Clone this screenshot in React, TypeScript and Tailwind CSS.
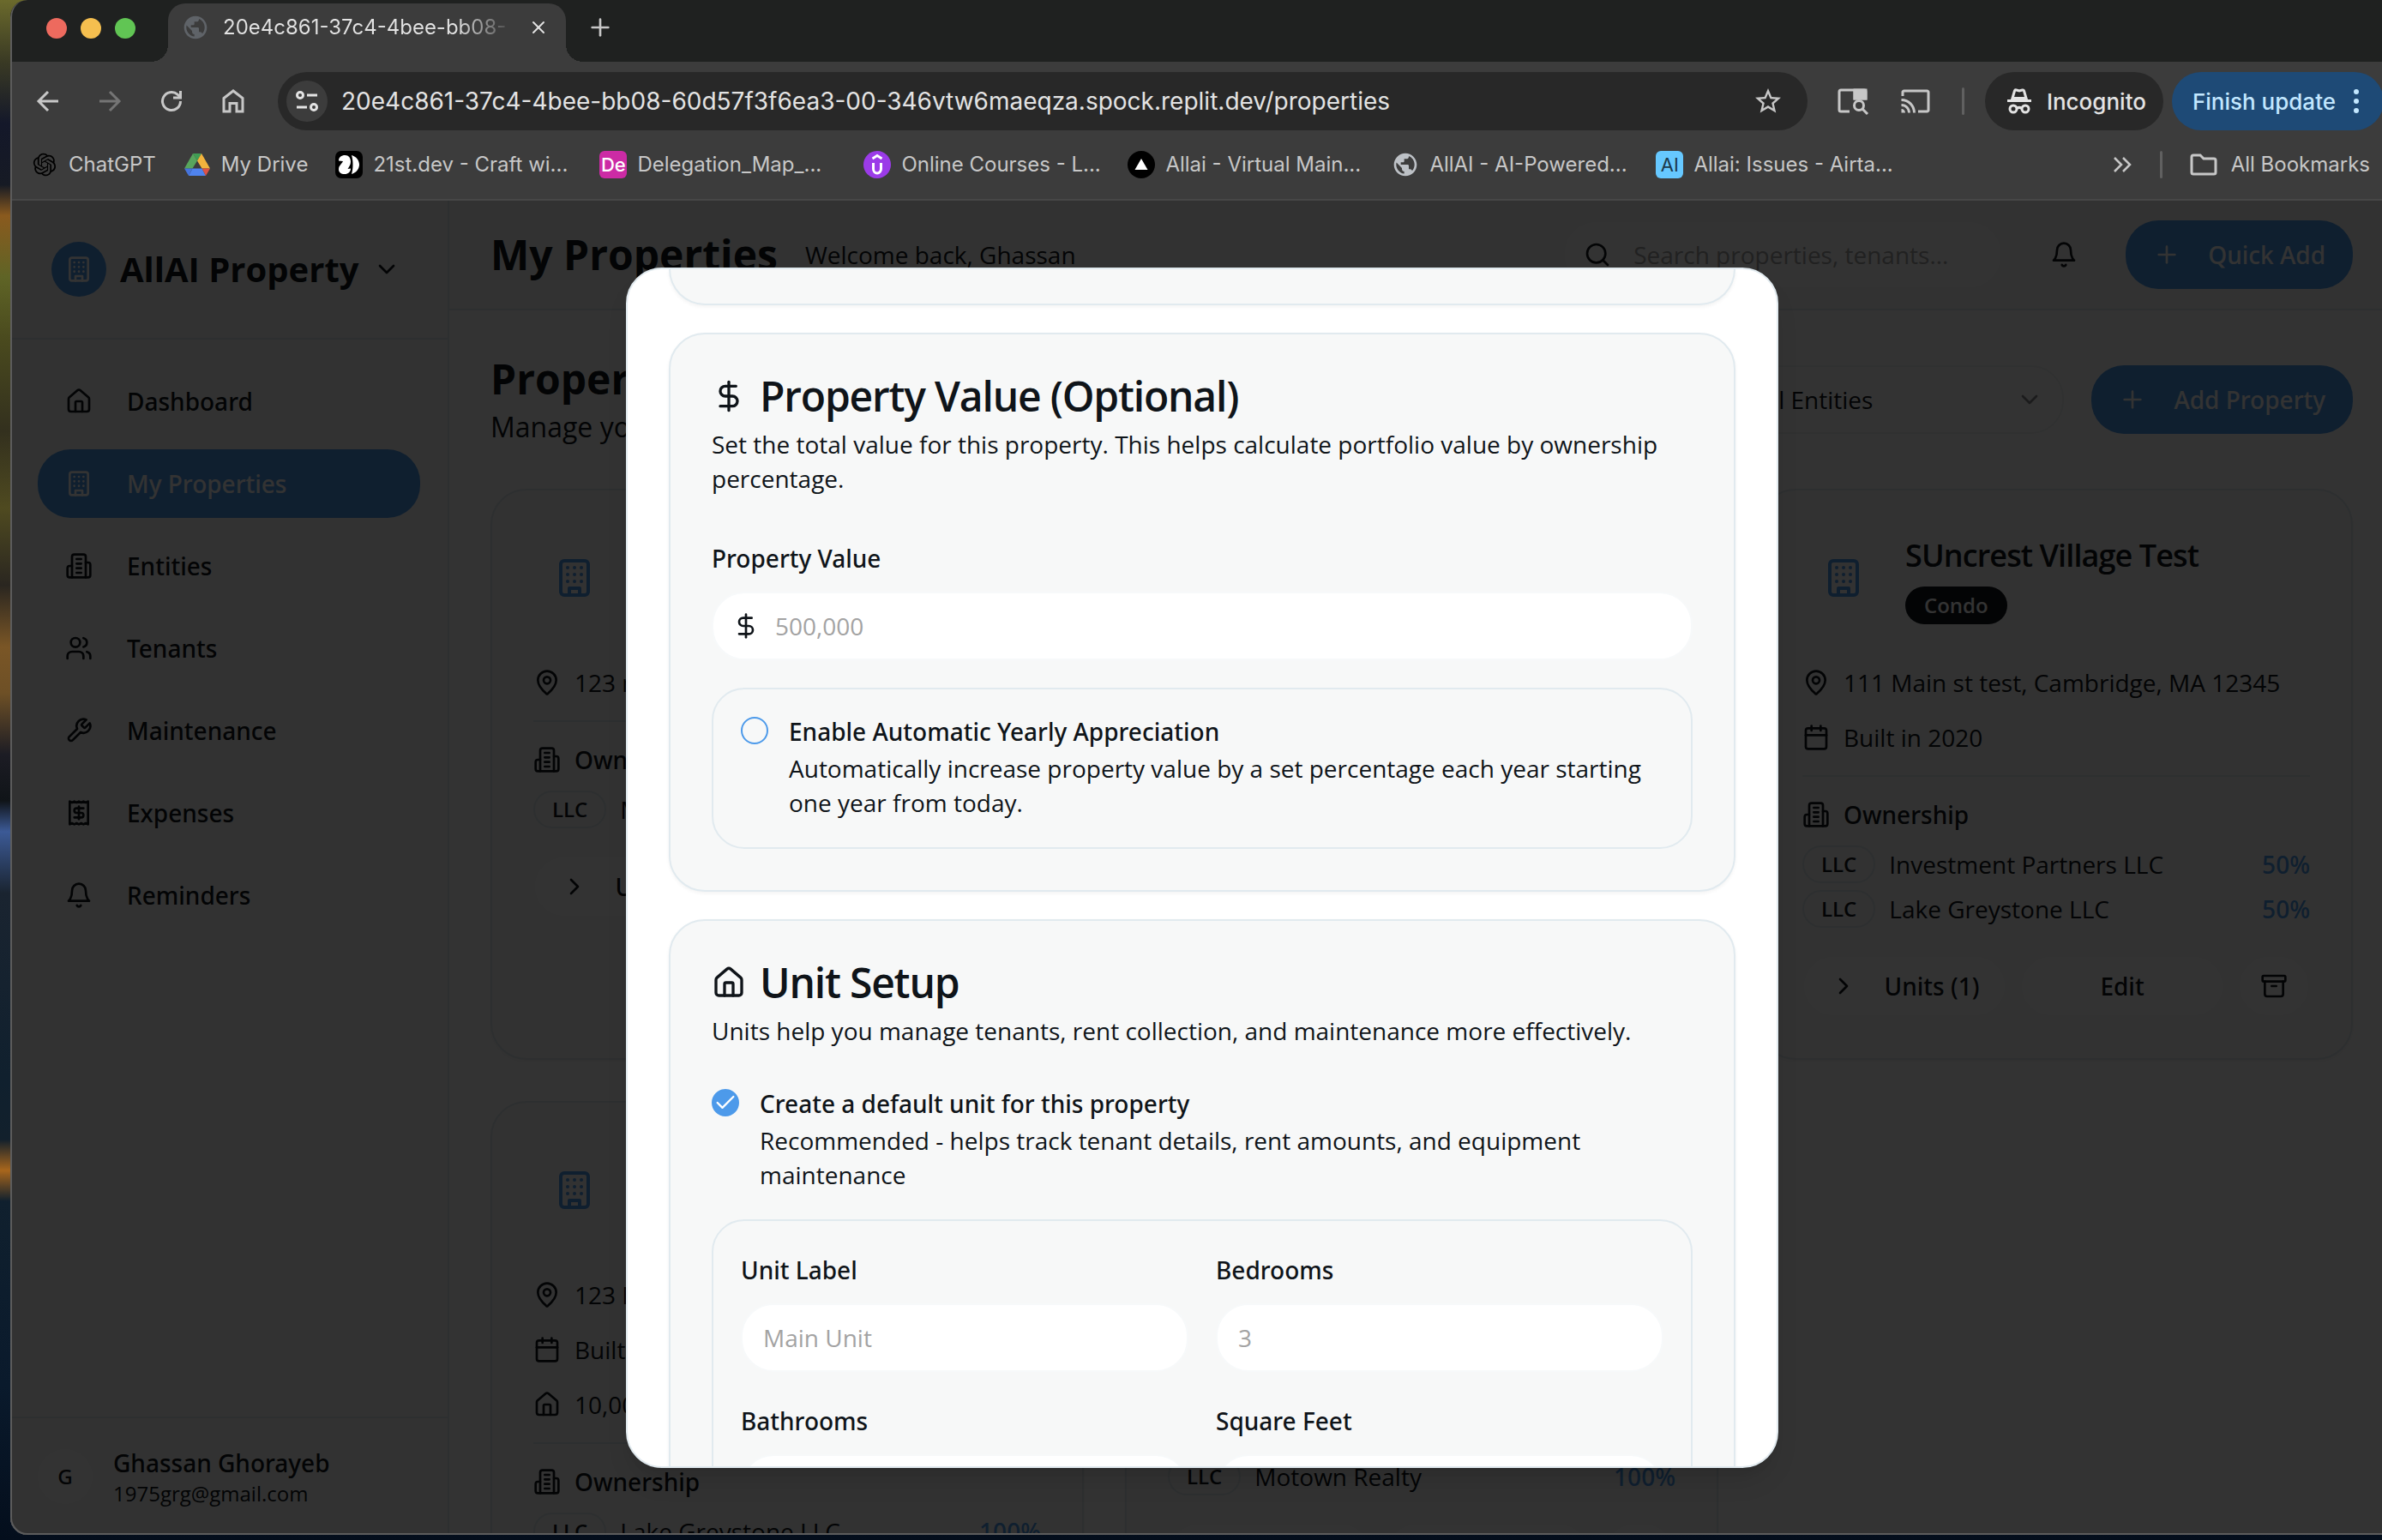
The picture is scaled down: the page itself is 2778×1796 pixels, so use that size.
import type { ReactNode } from "react";
import {
  Archive,
  Calendar,
  ChevronDown,
  ChevronRight,
  DollarSign,
  MapPin,
  Plus,
  Search,
  Users,
  X,
} from "lucide-react";
import { MdCast, MdPublic, MdStarBorder } from "react-icons/md";
import { RiOpenaiFill } from "react-icons/ri";

const medium = "font-['Noto_Sans','Open_Sans',sans-serif] font-medium";

/* ---------- Icons ---------- */

function Stroke({ className, children }: { className: string; children: ReactNode }) {
  return (
    <svg
      viewBox="0 0 24 24"
      fill="none"
      stroke="currentColor"
      strokeWidth="2"
      strokeLinecap="round"
      strokeLinejoin="round"
      className={className}
      aria-hidden="true"
    >
      {children}
    </svg>
  );
}

const HomeIcon = ({ className = "size-8" }: { className?: string }) => (
  <Stroke className={className}>
    <path d="M15 21v-8a1 1 0 0 0-1-1h-4a1 1 0 0 0-1 1v8" />
    <path d="M3 10a2 2 0 0 1 .709-1.528l7-5.999a2 2 0 0 1 2.582 0l7 5.999A2 2 0 0 1 21 10v9a2 2 0 0 1-2 2H5a2 2 0 0 1-2-2z" />
  </Stroke>
);

const BuildingIcon = ({ className = "size-8" }: { className?: string }) => (
  <Stroke className={className}>
    <rect width="16" height="20" x="4" y="2" rx="2" ry="2" />
    <path d="M9 22v-4h6v4" />
    <path d="M8 6h.01M16 6h.01M12 6h.01M12 10h.01M12 14h.01M16 10h.01M16 14h.01M8 10h.01M8 14h.01" />
  </Stroke>
);

const OfficeIcon = ({ className = "size-8" }: { className?: string }) => (
  <Stroke className={className}>
    <path d="M6 22V4a2 2 0 0 1 2-2h8a2 2 0 0 1 2 2v18Z" />
    <path d="M6 12H4a2 2 0 0 0-2 2v6a2 2 0 0 0 2 2h2" />
    <path d="M18 9h2a2 2 0 0 1 2 2v9a2 2 0 0 1-2 2h-2" />
    <path d="M10 6h4M10 10h4M10 14h4M10 18h4" />
  </Stroke>
);

const WrenchIcon = () => (
  <Stroke className="size-8">
    <path d="M14.7 6.3a1 1 0 0 0 0 1.4l1.6 1.6a1 1 0 0 0 1.4 0l3.77-3.77a6 6 0 0 1-7.94 7.94l-6.91 6.91a2.12 2.12 0 0 1-3-3l6.91-6.91a6 6 0 0 1 7.94-7.94l-3.76 3.76z" />
  </Stroke>
);

const ReceiptIcon = () => (
  <Stroke className="size-8">
    <path d="M4 2v20l2-1 2 1 2-1 2 1 2-1 2 1 2-1 2 1V2l-2 1-2-1-2 1-2-1-2 1-2-1-2 1Z" />
    <path d="M16 8h-6a2 2 0 1 0 0 4h4a2 2 0 1 1 0 4H8" />
    <path d="M12 17.5v-11" />
  </Stroke>
);

const BellIcon = () => (
  <Stroke className="size-8">
    <path d="M6 8a6 6 0 0 1 12 0c0 7 3 9 3 9H3s3-2 3-9" />
    <path d="M10.3 21a1.94 1.94 0 0 0 3.4 0" />
  </Stroke>
);

const DriveIcon = () => (
  <svg viewBox="0 0 32 32" className="size-8 shrink-0" aria-hidden="true">
    <path d="M11 3h10l-5 8.500z" fill="#3f9d54" />
    <path d="M11 3 1 20.500h9.500L16 11.500z" fill="#58a55d" />
    <path d="M21 3 31 20.500h-9.500L16 11.500z" fill="#f2b33d" />
    <path d="M10.500 20.500h11L26 29H6z" fill="#4f83ee" />
    <path d="M1 20.500h9.500L6 29z" fill="#4674dc" />
    <path d="M31 20.500h-9.500L26 29z" fill="#dc5246" />
  </svg>
);

const TwentyFirstIcon = () => (
  <svg viewBox="0 0 32 32" className="size-8 shrink-0" aria-hidden="true">
    <rect width="32" height="32" rx="7" fill="#000" />
    <path
      d="M4 11.500C4 7.500 7 5 11.500 5c4 0 6.500 3 6.500 7.500 0 4-2 6-3.500 8.500l3.500-.5c0 4-3 6.500-7 6.500-4.500 0-7-2-7-5.500 0-4.500 3.500-6 5-9.500z"
      fill="#fff"
    />
    <path d="M19 5c5.500 1.500 9 6 9 11s-3.500 9.500-9 11c2-6 2-16 0-22z" fill="#fff" />
  </svg>
);

const UdemyIcon = () => (
  <svg viewBox="0 0 32 32" className="size-8 shrink-0" aria-hidden="true">
    <circle cx="16" cy="16" r="16" fill="#9b3be8" />
    <path d="M10.500 9 16 5.500 21.500 9" stroke="#fff" strokeWidth="2.800" fill="none" />
    <path d="M11.500 14v7a4.500 5 0 0 0 9 0v-7" stroke="#fff" strokeWidth="3" fill="none" />
  </svg>
);

const TriangleIcon = () => (
  <svg viewBox="0 0 32 32" className="size-8 shrink-0" aria-hidden="true">
    <circle cx="16" cy="16" r="16" fill="#000" />
    <path d="M16 9l7.500 13h-15z" fill="#fff" />
  </svg>
);

/* ---------- Browser chrome ---------- */

const chromeIcon = "size-10 shrink-0";

function TabStrip() {
  return (
    <div className="flex h-[72px] items-end bg-[#1f2120]">
      <div className="flex h-full items-center gap-4 pr-[38px] pl-[42px] pb-1.5">
        <span className="size-6 rounded-full bg-[#ed6a5e]" />
        <span className="size-6 rounded-full bg-[#f5bf4f]" />
        <span className="size-6 rounded-full bg-[#61c554]" />
      </div>
      <div className="flex h-[68px] items-end">
        <span className="-ml-5 size-5 bg-[radial-gradient(circle_at_0_0,transparent_20px,#3c3c3c_20px)]" />
        <div className="flex h-full w-[464px] items-center gap-4 rounded-t-[20px] bg-[#3c3c3c] pr-5 pb-3 pl-4">
          <MdPublic className="size-8 shrink-0 text-[#5f6368]" />
          <span className="min-w-0 flex-1 overflow-hidden bg-[linear-gradient(90deg,#e3e3e3_80%,transparent)] bg-clip-text text-[24px] leading-8 whitespace-nowrap text-transparent">
            20e4c861-37c4-4bee-bb08-
          </span>
          <button type="button" aria-label="Close tab" className="text-[#e3e3e3]">
            <X className="size-6" />
          </button>
        </div>
        <span className="size-5 bg-[radial-gradient(circle_at_100%_0,transparent_20px,#3c3c3c_20px)]" />
      </div>
      <button type="button" aria-label="New tab" className="mb-6 ml-1 text-[#c7c7c7]">
        <Plus className="size-8" />
      </button>
    </div>
  );
}

function Toolbar() {
  return (
    <div className="flex items-center bg-[#3c3c3c] pt-3 pr-3 pl-6 text-[#c7c7c7]">
      <div className="flex items-center gap-8 pr-8">
        <button type="button" aria-label="Back">
          <svg viewBox="0 0 40 40" className={chromeIcon} fill="none" stroke="currentColor" strokeWidth="3">
            <path d="M32 20H10M20 9 9 20l11 11" />
          </svg>
        </button>
        <button type="button" aria-label="Forward" className="text-[#757575]">
          <svg viewBox="0 0 40 40" className={chromeIcon} fill="none" stroke="currentColor" strokeWidth="3">
            <path d="M8 20h22M20 9l11 11-11 11" />
          </svg>
        </button>
        <button type="button" aria-label="Reload">
          <svg viewBox="0 0 40 40" className={chromeIcon} fill="none" stroke="currentColor" strokeWidth="3">
            <path d="M30.500 20A10.500 10.500 0 1 1 27 12.200L30 15" />
            <path d="M30.500 8v8h-8.500" />
          </svg>
        </button>
        <button type="button" aria-label="Home">
          <svg viewBox="0 0 40 40" className={chromeIcon} fill="none" stroke="currentColor" strokeWidth="3">
            <path d="M9 32V16.500L20 8l11 8.500V32h-7v-9.500h-8V32z" />
          </svg>
        </button>
      </div>
      <div className="flex h-[68px] flex-1 items-center gap-4 rounded-full bg-[#282828] pr-7 pl-2.5">
        <button type="button" aria-label="Site information" className="flex size-12 shrink-0 items-center justify-center rounded-full bg-[#3c3c3c] text-[#e3e3e3]">
          <svg viewBox="0 0 32 32" className="size-8" fill="none" stroke="currentColor" strokeWidth="3">
            <circle cx="8" cy="9" r="3.500" />
            <path d="M16 9h12M4 23h12" />
            <circle cx="24" cy="23" r="3.500" />
          </svg>
        </button>
        <input
          type="text"
          aria-label="Address"
          defaultValue="20e4c861-37c4-4bee-bb08-60d57f3f6ea3-00-346vtw6maeqza.spock.replit.dev/properties"
          className="min-w-0 flex-1 bg-transparent text-[28px] leading-10 text-[#e3e3e3] outline-none"
        />
        <button type="button" aria-label="Bookmark this page">
          <MdStarBorder className="size-9" />
        </button>
      </div>
      <div className="flex items-center gap-9 pr-9 pl-8">
        <button type="button" aria-label="Search this page">
          <svg viewBox="0 0 40 40" className={chromeIcon} fill="none" stroke="currentColor" strokeWidth="3">
            <path d="M17 32H7a2 2 0 0 1-2-2V9a2 2 0 0 1 2-2h27a2 2 0 0 1 2 2v8H23V7" />
            <path d="M23 7h13v10H23z" fill="currentColor" />
            <circle cx="28" cy="25" r="5.500" />
            <path d="m32 29 6 6" />
          </svg>
        </button>
        <button type="button" aria-label="Cast">
          <MdCast className="size-9" />
        </button>
      </div>
      <span className="h-8 w-[3px] rounded-full bg-[#606060]" />
      <button type="button" className="ml-6 flex h-[68px] items-center gap-4 rounded-full bg-[#282828] pr-5 pl-6 text-[26px] font-medium text-[#e3e3e3]">
        <svg viewBox="0 0 32 32" className="size-8" aria-hidden="true">
          <path d="M8 12.500 10.500 4c.3-1 1-1.300 2-1l3.500 1 3.500-1c1-.3 1.700 0 2 1L24 12.500z" fill="none" stroke="currentColor" strokeWidth="3" />
          <path d="M2 14h28v3H2z" fill="currentColor" />
          <g fill="none" stroke="currentColor" strokeWidth="3">
            <circle cx="9" cy="25" r="4" />
            <circle cx="23" cy="25" r="4" />
            <path d="M13 24.500c2-1.500 4-1.500 6 0" />
          </g>
        </svg>
        Incognito
      </button>
      <button type="button" className="ml-2.5 flex h-[68px] items-center gap-2 rounded-full bg-[#1e4a76] pr-4 pl-6 text-[26px] font-medium text-[#c2e7ff]">
        Finish update
        <svg viewBox="0 0 32 32" className="size-8" fill="currentColor" aria-hidden="true">
          <circle cx="16" cy="5" r="3" />
          <circle cx="16" cy="16" r="3" />
          <circle cx="16" cy="27" r="3" />
        </svg>
      </button>
    </div>
  );
}

function Bookmark({ icon, wide, children }: { icon: ReactNode; wide?: boolean; children: ReactNode }) {
  return (
    <a href="#bookmark" className={wide ? "flex w-[276px] items-center gap-3" : "flex items-center gap-3"}>
      {icon}
      <span className="whitespace-nowrap">{children}</span>
    </a>
  );
}

function BookmarksBar() {
  return (
    <nav aria-label="Bookmarks" className="flex h-[82px] items-center gap-8 border-b-2 border-[#474747] bg-[#3c3c3c] pr-7 pl-6 text-[24px] leading-8 text-[#c7c7c7]">
      <Bookmark icon={<RiOpenaiFill className="size-8 shrink-0 text-black" />}>ChatGPT</Bookmark>
      <Bookmark icon={<DriveIcon />}>My Drive</Bookmark>
      <Bookmark wide icon={<TwentyFirstIcon />}>21st.dev - Craft wi...</Bookmark>
      <Bookmark
        wide
        icon={
          <span className="flex size-8 shrink-0 items-center justify-center rounded-md bg-[#cc2ba5] text-[22px] font-medium text-white">De</span>
        }
      >
        Delegation_Map_...
      </Bookmark>
      <Bookmark wide icon={<UdemyIcon />}>Online Courses - L...</Bookmark>
      <Bookmark wide icon={<TriangleIcon />}>Allai - Virtual Main...</Bookmark>
      <Bookmark wide icon={<MdPublic className="size-8 shrink-0 text-[#bdc1c6]" />}>AllAI - AI-Powered...</Bookmark>
      <Bookmark
        wide
        icon={
          <span className="flex size-8 shrink-0 items-center justify-center rounded-md bg-[#66c8ff] text-[22px] text-[#1c3a4c]">AI</span>
        }
      >
        Allai: Issues - Airta...
      </Bookmark>
      <div className="ml-auto flex items-center gap-8">
        <button type="button" aria-label="More bookmarks">
          <svg viewBox="0 0 24 24" className="size-6" fill="none" stroke="currentColor" strokeWidth="2.500">
            <path d="m3 4 8 8-8 8M13 4l8 8-8 8" />
          </svg>
        </button>
        <span className="h-8 w-[3px] rounded-full bg-[#606060]" />
        <button type="button" className="flex items-center gap-4">
          <svg viewBox="0 0 32 32" className="size-8" fill="none" stroke="currentColor" strokeWidth="3" aria-hidden="true">
            <path d="M2 7a2 2 0 0 1 2-2h8l4 4h12a2 2 0 0 1 2 2v14a2 2 0 0 1-2 2H4a2 2 0 0 1-2-2z" />
          </svg>
          All Bookmarks
        </button>
      </div>
    </nav>
  );
}

/* ---------- Application page ---------- */

const navItems = [
  { label: "Dashboard", icon: <HomeIcon /> },
  { label: "My Properties", icon: <BuildingIcon />, active: true },
  { label: "Entities", icon: <OfficeIcon /> },
  { label: "Tenants", icon: <Users className="size-8" /> },
  { label: "Maintenance", icon: <WrenchIcon /> },
  { label: "Expenses", icon: <ReceiptIcon /> },
  { label: "Reminders", icon: <BellIcon /> },
];

function Sidebar() {
  return (
    <aside className="flex w-[512px] shrink-0 flex-col border-r-2 border-[#e1eaef] bg-[#f7f8f8]">
      <div className="border-b-2 border-[#e1eaef] p-12">
        <button type="button" className="flex items-center gap-4">
          <span className="flex size-16 items-center justify-center rounded-full bg-[#4d9aea] text-white">
            <BuildingIcon />
          </span>
          <span className="text-[40px] leading-[56px] font-bold">AllAI Property</span>
          <ChevronDown className="size-8" />
        </button>
      </div>
      <nav aria-label="Main" className="flex flex-1 flex-col gap-4 p-8">
        {navItems.map((item) => (
          <a
            key={item.label}
            href="#nav"
            className={`${medium} flex h-20 items-center gap-10 rounded-[38px] px-8 ${item.active ? "bg-[#4d9aea] text-white" : ""}`}
          >
            {item.icon}
            {item.label}
          </a>
        ))}
      </nav>
      <div className="flex items-center gap-6 border-t-2 border-[#e1eaef] p-8">
        <span className={`${medium} flex size-16 items-center justify-center rounded-full bg-white text-[24px]`}>G</span>
        <div>
          <p className={medium}>Ghassan Ghorayeb</p>
          <p className="text-[24px] leading-8">1975grg@gmail.com</p>
        </div>
      </div>
    </aside>
  );
}

function PrimaryButton({ children }: { children: ReactNode }) {
  return (
    <button type="button" className={`${medium} flex h-20 items-center gap-8 rounded-[38px] bg-[#4d9aea] px-8 text-white`}>
      <Plus className="size-8" />
      {children}
    </button>
  );
}

function PageHeader() {
  return (
    <header className="flex h-32 shrink-0 items-center justify-between border-b-2 border-[#e1eaef] bg-[#f7f8f8] px-12">
      <div className="flex items-center gap-8">
        <h1 className="text-[48px] leading-[64px] font-bold">My Properties</h1>
        <p>Welcome back, Ghassan</p>
      </div>
      <div className="flex items-center gap-8">
        <div className="relative">
          <Search className="absolute top-6 left-6 size-8" />
          <input
            type="search"
            aria-label="Search"
            placeholder="Search properties, tenants..."
            className="h-20 w-[512px] rounded-[38px] border-2 border-[#f7f9fa] bg-white pr-6 pl-20 placeholder:text-[#a3a3a3]"
          />
        </div>
        <button type="button" aria-label="Notifications" className="flex size-20 items-center justify-center">
          <BellIcon />
        </button>
        <PrimaryButton>Quick Add</PrimaryButton>
      </div>
    </header>
  );
}

type Property = {
  name: string;
  kind: string;
  address: string;
  built?: string;
  area?: string;
  owners: { name: string; share: string }[];
};

const properties: Property[] = [
  { name: "Main Street House", kind: "Single Family", address: "123 main st, Cambridge, MA 12345", owners: [{ name: "Motown Realty", share: "100%" }] },
  { name: "Lakeview House", kind: "Single Family", address: "123 Main St, Cambridge, MA 12345", owners: [{ name: "Motown Realty", share: "100%" }] },
  {
    name: "SUncrest Village Test",
    kind: "Condo",
    address: "111 Main st test, Cambridge, MA 12345",
    built: "Built in 2020",
    owners: [
      { name: "Investment Partners LLC", share: "50%" },
      { name: "Lake Greystone LLC", share: "50%" },
    ],
  },
  {
    name: "Greystone Building",
    kind: "Residential Building",
    address: "123 Main St, Cambridge, MA 12345",
    built: "Built in 2020",
    area: "10,000 sq ft",
    owners: [{ name: "Lake Greystone LLC", share: "100%" }],
  },
  {
    name: "Motown Condo",
    kind: "Condo",
    address: "123 Main St, Cambridge, MA 12345",
    built: "Built in 2020",
    owners: [{ name: "Motown Realty", share: "100%" }],
  },
];

const outlineButton =
  "flex h-[72px] items-center justify-center rounded-[38px] border-2 border-[#f7f9fa] bg-white px-6";

function PropertyCard({ property }: { property: Property }) {
  return (
    <article className="flex flex-col rounded-[42px] border-2 border-[#e1eaef] bg-[#f7f8f8] p-12 shadow-[0_2px_4px_rgba(0,0,0,0.05)]">
      <div className="flex items-center gap-6">
        <span className="flex size-24 items-center justify-center text-[#4d9aea]">
          <BuildingIcon className="size-12" />
        </span>
        <div>
          <h3 className="text-[36px] leading-[56px] font-semibold tracking-tight">{property.name}</h3>
          <span className="mt-2 flex h-11 w-fit items-center rounded-full bg-[#0f1419] px-[22px] text-[24px] leading-8 font-semibold text-white">
            {property.kind}
          </span>
        </div>
      </div>
      <div className="mt-12 flex flex-col gap-6">
        <p className="flex items-center gap-4">
          <MapPin className="size-8" />
          {property.address}
        </p>
        {property.built && (
          <p className="flex items-center gap-4">
            <Calendar className="size-8" />
            {property.built}
          </p>
        )}
        {property.area && (
          <p className="flex items-center gap-4">
            <HomeIcon />
            {property.area}
          </p>
        )}
      </div>
      <div className="mt-6 border-t-2 border-[#e1eaef] pt-6">
        <h4 className={`${medium} flex items-center gap-4`}>
          <OfficeIcon />
          Ownership
        </h4>
        <ul className="mt-4 flex flex-col gap-2">
          {property.owners.map((owner) => (
            <li key={owner.name} className="flex h-11 items-center gap-4">
              <span className="flex h-11 items-center rounded-full border-2 border-[#e1eaef] px-5 text-[24px] leading-8 font-semibold">LLC</span>
              <span>{owner.name}</span>
              <span className={`${medium} ml-auto text-[#4d9aea]`}>{owner.share}</span>
            </li>
          ))}
        </ul>
      </div>
      <div className="mt-8 flex gap-4">
        <button type="button" className={`${outlineButton} ${medium} flex-1 gap-8`}>
          <ChevronRight className="size-8" />
          Units (1)
        </button>
        <button type="button" className={`${outlineButton} ${medium} flex-1`}>
          Edit
        </button>
        <button type="button" aria-label="Archive" className={outlineButton}>
          <Archive className="size-8" />
        </button>
      </div>
    </article>
  );
}

function PropertiesPage() {
  return (
    <main className="flex-1 bg-white p-12">
      <div className="flex items-center justify-between">
        <div>
          <h2 className="text-[48px] leading-[64px] font-bold">Properties</h2>
          <p className="text-[32px] leading-[48px]">Manage your property portfolio</p>
        </div>
        <div className="flex items-center gap-8">
          <div className="relative">
            <select
              aria-label="Filter by entity"
              className="h-20 w-[384px] appearance-none rounded-[38px] border-2 border-[#f1f3f4] bg-white px-6"
            >
              <option>All Entities</option>
            </select>
            <ChevronDown className="pointer-events-none absolute top-6 right-6 size-8 opacity-50" />
          </div>
          <PrimaryButton>Add Property</PrimaryButton>
        </div>
      </div>
      <div className="mt-12 grid grid-cols-3 gap-12">
        {properties.map((property) => (
          <PropertyCard key={property.name} property={property} />
        ))}
      </div>
    </main>
  );
}

/* ---------- Add property dialog ---------- */

function Section({ icon, title, description, children }: { icon: ReactNode; title: string; description: string; children: ReactNode }) {
  return (
    <section className="shrink-0 rounded-[42px] border-2 border-[#e1eaef] bg-[#f7f8f8] p-12 shadow-[0_2px_4px_rgba(0,0,0,0.05)]">
      <h2 className="flex items-center gap-4 text-[48px] leading-none font-semibold tracking-tight">
        {icon}
        {title}
      </h2>
      <p className="mt-3 mb-12">{description}</p>
      {children}
    </section>
  );
}

function Field({ id, label, placeholder, icon }: { id: string; label: string; placeholder: string; icon?: ReactNode }) {
  return (
    <div className="min-w-0">
      <div className="text-[32px] leading-[48px]">
        <label htmlFor={id} className={`${medium} text-[28px] leading-none`}>
          {label}
        </label>
      </div>
      <div className="relative mt-4">
        {icon}
        <input
          id={id}
          type="text"
          placeholder={placeholder}
          className={
            icon
              ? "h-20 w-full rounded-[38px] border-2 border-[#f7f9fa] bg-white pr-6 pl-[72px] placeholder:text-[#a3a3a3]"
              : "h-20 w-full rounded-[38px] border-2 border-[#f7f9fa] bg-white px-6 placeholder:text-[#a3a3a3]"
          }
        />
      </div>
    </div>
  );
}

function CheckOption({ id, label, description, checked }: { id: string; label: string; description: string; checked?: boolean }) {
  return (
    <div className="flex items-start gap-6">
      <span className="relative size-8 shrink-0">
        <input
          id={id}
          type="checkbox"
          defaultChecked={checked}
          className="peer block size-8 appearance-none rounded-full border-2 border-[#4d9aea] checked:bg-[#4d9aea]"
        />
        <svg
          viewBox="0 0 24 24"
          className="pointer-events-none absolute top-0.5 left-0.5 hidden size-7 text-white peer-checked:block"
          fill="none"
          stroke="currentColor"
          strokeWidth="2"
          strokeLinecap="round"
          strokeLinejoin="round"
          aria-hidden="true"
        >
          <path d="M20 6 9 17l-5-5" />
        </svg>
      </span>
      <div>
        <div className="text-[32px] leading-none">
          <label htmlFor={id} className={`${medium} text-[28px] leading-none`}>
            {label}
          </label>
        </div>
        <p className="mt-2">{description}</p>
      </div>
    </div>
  );
}

function PropertyDialog() {
  return (
    <div
      role="dialog"
      aria-modal="true"
      aria-label="Add property"
      className="flex h-[90%] w-full max-w-[1344px] flex-col gap-8 overflow-hidden rounded-[42px] border-2 border-[#e1eaef] bg-white px-12 shadow-[0_20px_30px_-6px_rgba(0,0,0,0.1),0_8px_12px_-8px_rgba(0,0,0,0.1)]"
    >
      <div className="h-[42px] shrink-0 rounded-b-[42px] border-x-2 border-b-2 border-[#e1eaef] bg-[#f7f8f8] shadow-[0_2px_4px_rgba(0,0,0,0.05)]" />
      <Section
        icon={<DollarSign className="size-10" />}
        title="Property Value (Optional)"
        description="Set the total value for this property. This helps calculate portfolio value by ownership percentage."
      >
        <Field
          id="property-value"
          label="Property Value"
          placeholder="500,000"
          icon={<DollarSign className="absolute top-6 left-6 size-8" />}
        />
        <div className="mt-8 rounded-[38px] border-2 border-[#e1eaef] p-8">
          <CheckOption
            id="auto-appreciation"
            label="Enable Automatic Yearly Appreciation"
            description="Automatically increase property value by a set percentage each year starting one year from today."
          />
        </div>
      </Section>
      <Section
        icon={<HomeIcon className="size-10" />}
        title="Unit Setup"
        description="Units help you manage tenants, rent collection, and maintenance more effectively."
      >
        <CheckOption
          id="default-unit"
          checked
          label="Create a default unit for this property"
          description="Recommended - helps track tenant details, rent amounts, and equipment maintenance"
        />
        <div className="mt-8 grid grid-cols-2 gap-8 rounded-[38px] border-2 border-[#e1eaef] p-8">
          <Field id="unit-label" label="Unit Label" placeholder="Main Unit" />
          <Field id="bedrooms" label="Bedrooms" placeholder="3" />
          <Field id="bathrooms" label="Bathrooms" placeholder="2.5" />
          <Field id="square-feet" label="Square Feet" placeholder="1200" />
        </div>
      </Section>
    </div>
  );
}

/* ---------- Window on the desktop ---------- */

export default function App() {
  return (
    <div className="flex h-screen overflow-hidden bg-[linear-gradient(180deg,#6b6a2c_0%,#3a3a24_4%,#14182a_8%,#161a24_12%,#8a5a1e_14%,#5f6426_18%,#4a4a1e_22%,#33301e_28%,#4f4a20_33%,#2a2620_38%,#7a5626_42%,#6e5026_45%,#1c1c24_49%,#101418_52%,#3c5a96_54%,#1a2430_58%,#10202e_70%,#12202c_74%,#a8661c_76%,#10202e_78%,#0a1a2c_90%,#040e1c_100%)] pb-1.5 pl-3">
      <div className="relative -mr-3.5 flex min-w-0 flex-1 flex-col overflow-hidden rounded-l-[20px] font-['Inter',sans-serif]">
        <TabStrip />
        <Toolbar />
        <BookmarksBar />
        <div className="relative flex min-h-0 flex-1 overflow-hidden font-['Open_Sans',sans-serif] text-[28px] leading-10 text-[#0f1419]">
          <Sidebar />
          <div className="flex min-w-0 flex-1 flex-col">
            <PageHeader />
            <PropertiesPage />
          </div>
          <div className="absolute inset-0 flex items-center justify-center bg-black/80">
            <PropertyDialog />
          </div>
        </div>
        <div className="pointer-events-none absolute inset-0 rounded-l-[20px] border-b-2 border-l-2 border-[#5c5c5c]" />
      </div>
    </div>
  );
}
